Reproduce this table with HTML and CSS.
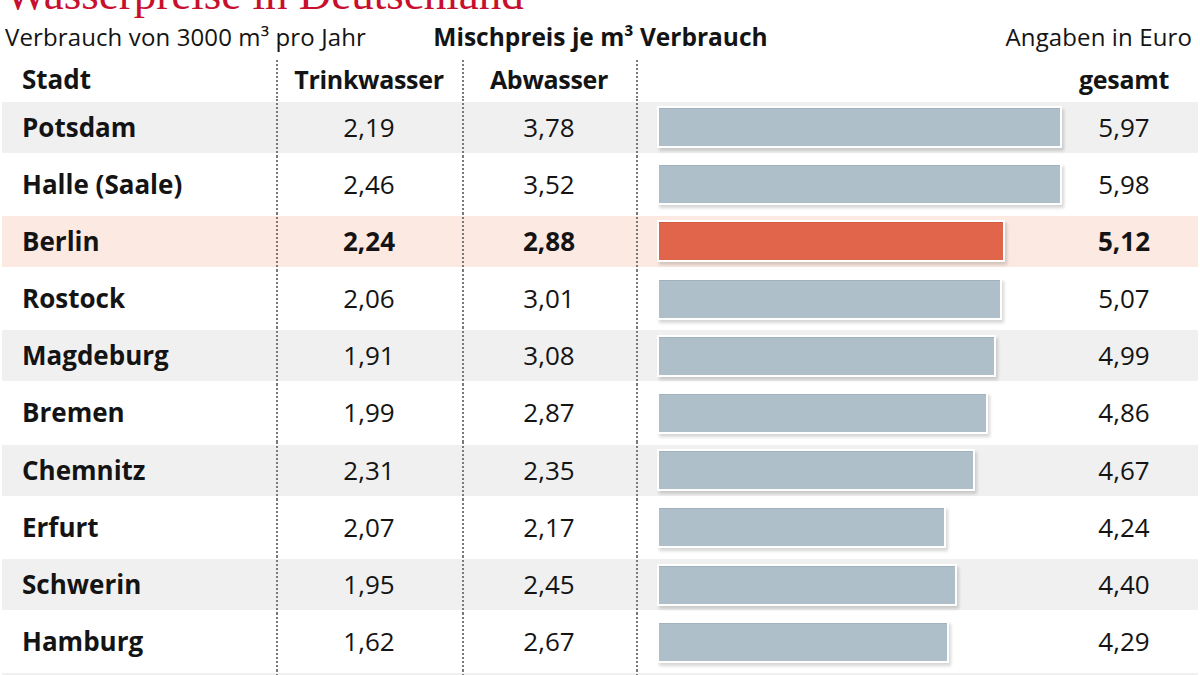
FILE: index.html
```html
<!DOCTYPE html>
<html lang="de">
<head>
<meta charset="utf-8">
<title>Wasserpreise in Deutschland</title>
<link rel="stylesheet" href="styles.css">
</head>
<body>
<div class="page">
  <h1 class="title">Wasserpreise in Deutschland</h1>
  <div class="subline">
    <span class="sub-left">Verbrauch von 3000 m³ pro Jahr</span>
    <span class="sub-mid">Mischpreis je m³ Verbrauch</span>
    <span class="sub-right">Angaben in Euro</span>
  </div>
  <div class="table">
    <div class="row head">
      <div class="cell city">Stadt</div>
      <div class="cell num sep">Trinkwasser</div>
      <div class="cell num sep">Abwasser</div>
      <div class="cell bar-cell sep"></div>
      <div class="cell total">gesamt</div>
    </div>
    <div class="row gray">
      <div class="cell city">Potsdam</div>
      <div class="cell num sep">2,19</div>
      <div class="cell num sep">3,78</div>
      <div class="cell bar-cell sep"><span class="bar" style="width:401px"></span></div>
      <div class="cell total">5,97</div>
    </div>
    <div class="row">
      <div class="cell city">Halle (Saale)</div>
      <div class="cell num sep">2,46</div>
      <div class="cell num sep">3,52</div>
      <div class="cell bar-cell sep"><span class="bar" style="width:402px"></span></div>
      <div class="cell total">5,98</div>
    </div>
    <div class="row hl">
      <div class="cell city">Berlin</div>
      <div class="cell num sep">2,24</div>
      <div class="cell num sep">2,88</div>
      <div class="cell bar-cell sep"><span class="bar bar-hl" style="width:344px"></span></div>
      <div class="cell total">5,12</div>
    </div>
    <div class="row">
      <div class="cell city">Rostock</div>
      <div class="cell num sep">2,06</div>
      <div class="cell num sep">3,01</div>
      <div class="cell bar-cell sep"><span class="bar" style="width:341px"></span></div>
      <div class="cell total">5,07</div>
    </div>
    <div class="row gray">
      <div class="cell city">Magdeburg</div>
      <div class="cell num sep">1,91</div>
      <div class="cell num sep">3,08</div>
      <div class="cell bar-cell sep"><span class="bar" style="width:335px"></span></div>
      <div class="cell total">4,99</div>
    </div>
    <div class="row">
      <div class="cell city">Bremen</div>
      <div class="cell num sep">1,99</div>
      <div class="cell num sep">2,87</div>
      <div class="cell bar-cell sep"><span class="bar" style="width:327px"></span></div>
      <div class="cell total">4,86</div>
    </div>
    <div class="row gray">
      <div class="cell city">Chemnitz</div>
      <div class="cell num sep">2,31</div>
      <div class="cell num sep">2,35</div>
      <div class="cell bar-cell sep"><span class="bar" style="width:314px"></span></div>
      <div class="cell total">4,67</div>
    </div>
    <div class="row">
      <div class="cell city">Erfurt</div>
      <div class="cell num sep">2,07</div>
      <div class="cell num sep">2,17</div>
      <div class="cell bar-cell sep"><span class="bar" style="width:285px"></span></div>
      <div class="cell total">4,24</div>
    </div>
    <div class="row gray">
      <div class="cell city">Schwerin</div>
      <div class="cell num sep">1,95</div>
      <div class="cell num sep">2,45</div>
      <div class="cell bar-cell sep"><span class="bar" style="width:296px"></span></div>
      <div class="cell total">4,40</div>
    </div>
    <div class="row">
      <div class="cell city">Hamburg</div>
      <div class="cell num sep">1,62</div>
      <div class="cell num sep">2,67</div>
      <div class="cell bar-cell sep"><span class="bar" style="width:288px"></span></div>
      <div class="cell total">4,29</div>
    </div>
    <div class="row gray">
      <div class="cell city"></div>
      <div class="cell num sep"></div>
      <div class="cell num sep"></div>
      <div class="cell bar-cell sep"></div>
      <div class="cell total"></div>
    </div>
  </div>
</div>
</body>
</html>
```

FILE: styles.css
```css
html, body {
  margin: 0;
  padding: 0;
  overflow: hidden;
  background: #ffffff;
}

.page {
  width: 1200px;
  height: 675px;
  overflow: hidden;
  font-family: "Open Sans", "Noto Sans", "DejaVu Sans", sans-serif;
  color: #141414;
}

.title {
  margin: -18px 0 0 5px;
  height: 24px;
  font-family: "Liberation Serif", "Times New Roman", serif;
  font-weight: normal;
  font-size: 45px;
  line-height: 24px;
  color: #c8102e;
  white-space: nowrap;
}

.subline {
  display: grid;
  grid-template-columns: 1fr auto 1fr;
  align-items: baseline;
  height: 30px;
  line-height: 30px;
  margin-top: 16px;
  padding: 0 8px 0 5px;
  font-size: 24px;
  letter-spacing: 0.12px;
}

.sub-left { justify-self: start; }
.sub-mid { justify-self: center; font-weight: 700; font-size: 24.5px; letter-spacing: 0; padding-left: 4px; }
.sub-right { justify-self: end; }

.table {
  margin-top: 8px;
}

.row {
  display: grid;
  grid-template-columns: 276px 186px 174px 424px 1fr;
  height: 57.2px;
  line-height: 57.2px;
  font-size: 26px;
}

.row.head {
  height: 38.5px;
  line-height: 38.5px;
  font-size: 25px;
  font-weight: 700;
}

.row.head .num,
.row.head .total {
  letter-spacing: -0.3px;
}

.row.gray {
  background: linear-gradient(#f0f0f0, #f0f0f0) 2px 3px / calc(100% - 4px) calc(100% - 6px) no-repeat;
}

.row.hl {
  background: linear-gradient(#fce9e1, #fce9e1) 2px 3px / calc(100% - 4px) calc(100% - 6px) no-repeat;
}

.row.hl .num,
.row.hl .total {
  font-weight: 700;
}

.cell {
  white-space: nowrap;
}

.city {
  padding-left: 22px;
  font-weight: 700;
}

.row.head .city {
  font-size: 26px;
}

.num {
  text-align: center;
}

.total {
  text-align: center;
  padding-right: 12px;
}

.sep {
  background: repeating-linear-gradient(to bottom, #7a7a7a 0 2px, transparent 2px 4px) 0 0 / 2px 100% no-repeat;
}

.bar-cell {
  display: flex;
  align-items: center;
  padding-left: 23px;
}

.bar {
  display: block;
  height: 37px;
  background: #aebfca;
  border-top: 1px solid #9fb2be;
  box-shadow: 0 0 0 2px #ffffff, 2px 3px 3px 2px rgba(0, 0, 0, 0.16);
}

.bar.bar-hl {
  background: #e0654a;
  border-top-color: #d45a40;
}
```
